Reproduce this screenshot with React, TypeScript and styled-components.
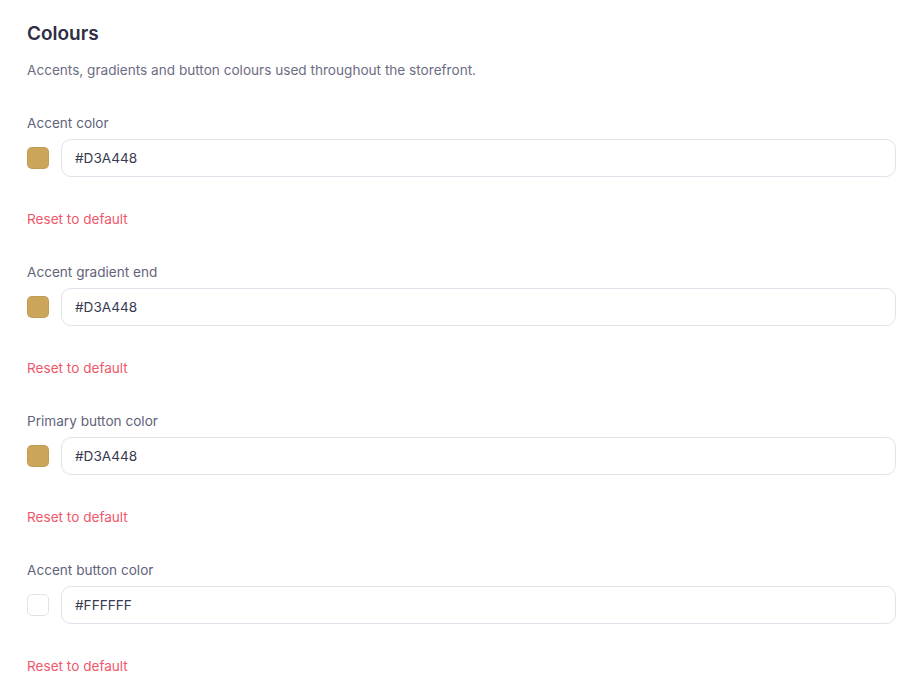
import React, { useState } from 'react';
import styled, { createGlobalStyle } from 'styled-components';

const GlobalStyle = createGlobalStyle`
  * { box-sizing: border-box; }
  body {
    margin: 0;
    background: #ffffff;
    font-family: Inter, "Noto Sans", "Liberation Sans", sans-serif;
    -webkit-font-smoothing: antialiased;
  }
`;

const Page = styled.div`
  padding: 22px 23px 0 27px;
`;

const Title = styled.h2`
  margin: 0;
  font-size: 19px;
  line-height: 24px;
  font-weight: 600;
  color: #2e2e44;
`;

const Description = styled.p`
  margin: 14px 0 0;
  font-size: 13.6px;
  line-height: 20px;
  color: #6c6d82;
`;

const Fields = styled.div`
  display: flex;
  flex-direction: column;
  gap: 33.5px;
  margin-top: 33px;
`;

const Field = styled.div`
  display: flex;
  flex-direction: column;
`;

const Label = styled.label`
  font-size: 13.6px;
  line-height: 20px;
  color: #62637a;
`;

const Row = styled.div`
  display: flex;
  align-items: center;
  gap: 12px;
  margin-top: 6px;
`;

const Swatch = styled.div<{ $color: string }>`
  flex: none;
  width: 22px;
  height: 22px;
  border-radius: 5px;
  background: ${(p) => p.$color};
  filter: saturate(0.82);
  border: 1px solid ${(p) => (p.$color.toUpperCase() === '#FFFFFF' ? '#e1e1ea' : 'rgba(0,0,0,0.05)')};
`;

const HexInput = styled.input`
  flex: 1;
  height: 37.5px;
  padding: 0 13px;
  border: 1px solid #e2e2ec;
  border-radius: 10px;
  font-family: inherit;
  font-size: 13.6px;
  color: #383a50;
  background: #fff;
  outline: none;
`;

const ResetLink = styled.button`
  align-self: flex-start;
  margin-top: 32px;
  padding: 0;
  border: 0;
  background: none;
  font-family: inherit;
  font-size: 13.6px;
  line-height: 20px;
  color: #f0576b;
  cursor: pointer;
`;

const fields = [
  { id: 'accent', label: 'Accent color', value: '#D3A448' },
  { id: 'gradient', label: 'Accent gradient end', value: '#D3A448' },
  { id: 'primary', label: 'Primary button color', value: '#D3A448' },
  { id: 'accentButton', label: 'Accent button color', value: '#FFFFFF' },
];

const App = () => {
  const [values, setValues] = useState<Record<string, string>>(
    Object.fromEntries(fields.map((f) => [f.id, f.value]))
  );

  return (
    <>
      <GlobalStyle />
      <Page>
        <Title>Colours</Title>
        <Description>Accents, gradients and button colours used throughout the storefront.</Description>
        <Fields>
          {fields.map((f) => (
            <Field key={f.id}>
              <Label htmlFor={f.id}>{f.label}</Label>
              <Row>
                <Swatch $color={values[f.id]} />
                <HexInput
                  id={f.id}
                  value={values[f.id]}
                  onChange={(e) => setValues({ ...values, [f.id]: e.target.value })}
                />
              </Row>
              <ResetLink onClick={() => setValues({ ...values, [f.id]: f.value })}>Reset to default</ResetLink>
            </Field>
          ))}
        </Fields>
      </Page>
    </>
  );
};

export default App;
